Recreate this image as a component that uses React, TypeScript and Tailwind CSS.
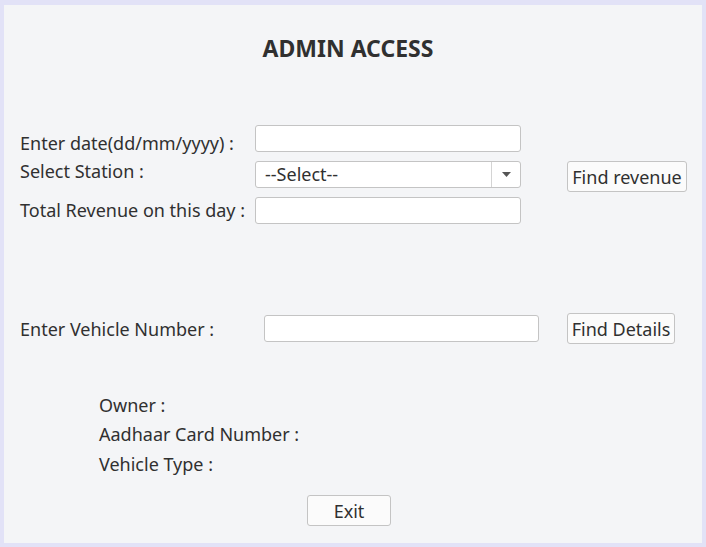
export default function App() {
  return (
    <div className="w-[706px] h-[547px] box-border border-[4px] border-t-[5px] border-[#e2e2f7] bg-[#f4f5f7] text-[#303030] font-['Noto_Sans','Liberation_Sans',sans-serif] flex flex-col pl-[16px]">
      <h1 className="mt-[29px] pr-[26px] text-center text-[23px] font-bold leading-[28px] text-[#303030]">
        ADMIN ACCESS
      </h1>

      {/* Row 1 */}
      <div className="mt-[63px] flex h-[27px] items-start">
        <div className="w-[235px] pt-[8px] text-[18px] leading-[20px]">Enter date(dd/mm/yyyy) :</div>
        <div className="h-[27px] w-[266px] rounded-[3px] border border-[#c4c4c4] bg-white" />
      </div>

      {/* Row 2 */}
      <div className="mt-[9px] flex h-[27px] items-start">
        <div className="w-[235px] text-[18px] leading-[20px]">Select Station :</div>
        <div className="flex h-[27px] w-[266px] items-stretch rounded-[3px] border border-[#c4c4c4] bg-white">
          <div className="flex-1 pl-[9px] pt-[2px] text-[18px] leading-[20px]">--Select--</div>
          <div className="flex w-[29px] items-center justify-center border-l border-[#d4d4d4]">
            <svg width="9" height="5" viewBox="0 0 9 5">
              <path d="M0 0 L9 0 L4.5 5 Z" fill="#555555" />
            </svg>
          </div>
        </div>
        <button className="ml-[46px] h-[31px] w-[120px] rounded-[3px] border border-[#c4c4c4] bg-[#fbfbfb] text-[18px] leading-[20px] text-[#303030]">
          Find revenue
        </button>
      </div>

      {/* Row 3 */}
      <div className="mt-[9px] flex h-[27px] items-start">
        <div className="w-[235px] pt-[3px] text-[18px] leading-[20px]">Total Revenue on this day :</div>
        <div className="h-[27px] w-[266px] rounded-[3px] border border-[#c4c4c4] bg-white" />
      </div>

      {/* Row 4 */}
      <div className="mt-[89px] flex h-[31px] items-center">
        <div className="w-[244px] text-[18px] leading-[20px]">Enter Vehicle Number :</div>
        <div className="h-[27px] w-[275px] rounded-[3px] border border-[#c4c4c4] bg-white" />
        <button className="ml-[28px] h-[31px] w-[108px] rounded-[3px] border border-[#c4c4c4] bg-[#fbfbfb] text-[18px] leading-[20px] text-[#303030]">
          Find Details
        </button>
      </div>

      {/* Details */}
      <div className="mt-[51px] flex flex-col pl-[79px] text-[18px] leading-[20px]">
        <div>Owner :</div>
        <div className="mt-[9px]">Aadhaar Card Number :</div>
        <div className="mt-[10px]">Vehicle Type :</div>
      </div>

      <div className="mt-[21px] flex pl-[287px]">
        <button className="h-[31px] w-[84px] rounded-[3px] border border-[#c4c4c4] bg-[#fbfbfb] text-[18px] leading-[20px] text-[#303030]">
          Exit
        </button>
      </div>
    </div>
  );
}
